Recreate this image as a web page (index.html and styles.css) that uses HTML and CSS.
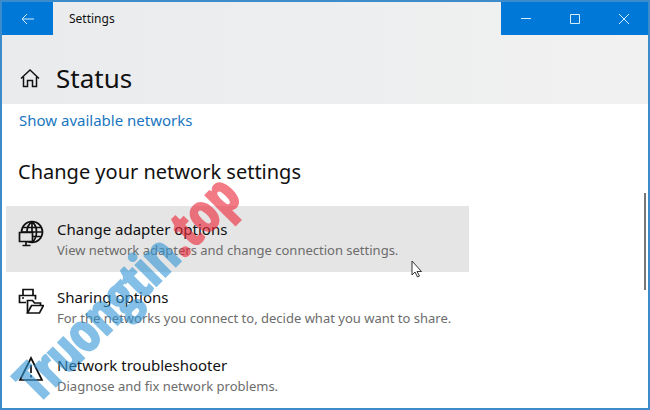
FILE: index.html
```html
<!DOCTYPE html>
<html lang="en">
<head>
    <meta charset="utf-8">
    <title>Settings</title>
    <link rel="stylesheet" href="styles.css">
</head>
<body>
<div class="window">
    <header class="top">
        <div class="titlebar">
            <button type="button" class="back" aria-label="Back">
                <svg width="14" height="12" viewBox="0 0 14 12"><path d="M13 6H1M6 1L1 6l5 5"/></svg>
            </button>
            <span class="app-name">Settings</span>
            <div class="controls">
                <button type="button" aria-label="Minimize">
                    <svg width="12" height="12" viewBox="0 0 12 12"><path d="M1 5.5h10"/></svg>
                </button>
                <button type="button" aria-label="Maximize">
                    <svg width="12" height="12" viewBox="0 0 12 12"><path d="M1.5 1.5h9v9h-9z"/></svg>
                </button>
                <button type="button" aria-label="Close">
                    <svg width="12" height="12" viewBox="0 0 12 12"><path d="M1 1l10 10M11 1L1 11"/></svg>
                </button>
            </div>
        </div>
        <div class="heading">
            <svg class="home" width="20" height="20" viewBox="0 0 20 20"><path d="M1 10.5L10 2l9 8.500M3.500 9v9.500h4v-6h5v6h4V9"/></svg>
            <h1>Status</h1>
        </div>
    </header>

    <main class="content">
        <a href="#" class="link">Show available networks</a>
        <h2>Change your network settings</h2>
        <ul class="options">
            <li>
                <a href="#" class="option active">
                    <svg class="icon" width="26" height="28" viewBox="0 0 26 28">
                        <circle cx="14" cy="13" r="10.500"/>
                        <path d="M14 2.500c-4 3-5 7-5 10.500M14 2.500c6 5 6 16 0 21M14 2.500v11M5 8.500h18M15 17.500h8M4 13h20.500"/>
                        <path class="fill" d="M1.500 13.500h13v9h-13z"/>
                        <path d="M8 22.500v4M4.500 26.500h8"/>
                    </svg>
                    <span class="text">
                        <span class="name">Change adapter options</span>
                        <span class="desc">View network adapters and change connection settings.</span>
                    </span>
                </a>
            </li>
            <li>
                <a href="#" class="option">
                    <svg class="icon" width="26" height="28" viewBox="0 0 26 28">
                        <path d="M5 8.500V2.500h10v6M8 15.500H1.500v-7h16v4M4 11h2"/>
                        <path class="fill" d="M9.500 26V13.500h5l2 2.500h6v3"/>
                        <path class="fill" d="M9.500 26l4-7.500h12l-4 7.500z"/>
                    </svg>
                    <span class="text">
                        <span class="name">Sharing options</span>
                        <span class="desc">For the networks you connect to, decide what you want to share.</span>
                    </span>
                </a>
            </li>
            <li>
                <a href="#" class="option">
                    <svg class="icon" width="26" height="28" viewBox="0 0 26 28">
                        <path d="M13 3l11 22H2zM13 10v8M13 20v2.500"/>
                    </svg>
                    <span class="text">
                        <span class="name">Network troubleshooter</span>
                        <span class="desc">Diagnose and fix network problems.</span>
                    </span>
                </a>
            </li>
        </ul>
    </main>

    <div class="scroll-thumb"></div>
    <div class="watermark">Truongtin<span>.top</span></div>
    <svg class="cursor" width="12" height="18" viewBox="0 0 12 18"><path d="M1 1v14l3-3 2.500 5 2-1-2.500-4.500h4.500z"/></svg>
</div>
</body>
</html>
```
FILE: styles.css
```css
* {
    box-sizing: border-box;
}

body {
    margin: 0;
    font-family: "Noto Sans", "Open Sans", sans-serif;
    color: #111;
    background: #fff;
}

.window {
    position: relative;
    height: 100vh;
    overflow: hidden;
    border: 2px solid #3c8ccb;
    background: #fff;
}

.top {
    background: linear-gradient(90deg, #e9ebed, #f1f1f1);
}

.titlebar {
    display: flex;
    align-items: stretch;
    height: 33px;
}

.titlebar button {
    display: flex;
    align-items: center;
    justify-content: center;
    width: 49px;
    padding: 0;
    border: 0;
    background: #0078d7;
}

.titlebar .back {
    width: 51px;
}

.titlebar svg {
    fill: none;
    stroke: #d4eeff;
    stroke-width: 1;
}

.app-name {
    padding-left: 16px;
    font-size: 12px;
    line-height: 33px;
}

.controls {
    display: flex;
    margin-left: auto;
}

.heading {
    display: flex;
    align-items: center;
    gap: 16px;
    height: 69px;
    padding: 16px 18px 0;
}

.home {
    fill: none;
    stroke: #111;
    stroke-width: 1.5;
}

h1 {
    margin: 0;
    font-size: 26px;
    font-weight: 400;
    line-height: 36px;
}

.content {
    padding: 4px;
}

.link {
    display: block;
    padding-left: 13px;
    font-size: 15px;
    line-height: 24px;
    color: #1976c0;
    text-decoration: none;
}

h2 {
    margin: 24px 0 18px;
    padding-left: 12px;
    font-size: 20px;
    font-weight: 400;
    line-height: 32px;
}

.options {
    display: flex;
    flex-direction: column;
    gap: 2px;
    max-width: 463px;
    margin: 0;
    padding: 0;
    list-style: none;
}

.option {
    display: flex;
    gap: 13px;
    height: 66px;
    padding: 13px 0 0 12px;
    color: #111;
    text-decoration: none;
    white-space: nowrap;
}

.option.active {
    background: #e5e5e5;
}

.icon {
    flex: none;
    fill: none;
    stroke: #111;
    stroke-width: 1.7;
}

.icon .fill {
    fill: #fff;
}

.active .icon .fill {
    fill: #e5e5e5;
}

.name, .desc {
    display: block;
    line-height: 21px;
}

.name {
    font-size: 15px;
}

.desc {
    font-size: 13px;
    color: #6c6c6c;
}

.scroll-thumb {
    position: absolute;
    top: 191px;
    right: 2px;
    width: 2px;
    height: 97px;
    background: #767676;
}

.watermark {
    position: absolute;
    left: 34px;
    bottom: 6px;
    font-family: "Liberation Sans Narrow", "Open Sans Condensed", "DejaVu Sans Condensed", sans-serif;
    font-size: 54px;
    font-weight: 700;
    line-height: 36px;
    color: #3296d6;
    -webkit-text-stroke: 2px;
    opacity: 0.6;
    transform: rotate(-45deg);
    transform-origin: 0 100%;
    pointer-events: none;
}

.watermark span {
    color: #ec2436;
}

.cursor {
    position: absolute;
    left: 409px;
    top: 258px;
    fill: #fff;
    stroke: #333;
    stroke-width: 1;
}
```
